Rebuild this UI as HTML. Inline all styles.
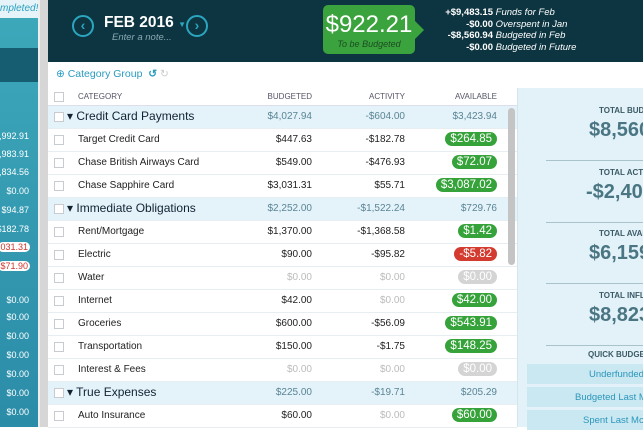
<!DOCTYPE html>
<html><head><style>
*{margin:0;padding:0;box-sizing:border-box}
body{width:643px;height:427px;overflow:hidden;font-family:"Liberation Sans",sans-serif;background:#fff;position:relative}
.side{position:absolute;left:0;top:0;width:38px;height:427px;background:linear-gradient(#3ea9bb,#2b8ca8)}
.side .top{position:absolute;top:0;left:0;width:38px;height:18px;background:#e6f3f8;color:#2aa0c0;font-size:10px;font-style:italic;text-align:right;padding-top:3px;white-space:nowrap;overflow:hidden}
.side .dk{position:absolute;top:48px;height:34px;width:38px;background:#165d72}
.side .n{position:absolute;right:9px;color:#fff;font-size:9px;white-space:nowrap}
.side .r{background:#fff;color:#d0352c;border-radius:7px;padding:0 2px;right:8px}
.gut{position:absolute;left:38px;top:0;width:10px;height:427px;background:#d6d6d6;border-left:2px solid #eee}
.hdr{position:absolute;left:48px;top:0;width:595px;height:62px;background:#0d3541}
.circ{position:absolute;top:15px;width:22px;height:22px;border:2.5px solid #2aa6bf;border-radius:50%;color:#2aa6bf;font-size:14px;font-weight:bold;text-align:center;line-height:16px}
.tbb{position:absolute;left:323px;top:5px;width:92px;height:49px;background:#3aa33d;border-radius:5px;color:#fff;text-align:center}
.tbb:after{content:"";position:absolute;right:-9px;top:16px;border-left:9px solid #3aa33d;border-top:9px solid transparent;border-bottom:9px solid transparent}
.fund{position:absolute;left:437px;top:7px;color:#fff;font-size:9.5px;line-height:11.5px;white-space:nowrap}
.fund b{display:inline-block;width:56px;text-align:right}
.fund i{font-weight:normal}
.tool{position:absolute;left:56px;top:68px;color:#2a9cc0;font-size:10.5px}
.grid{position:absolute;left:48px;top:88px;width:469px}
.row{height:23px;border-bottom:1px solid #e6eef2;position:relative;font-size:10px;color:#222}
.row.g{background:#e4f2f9;font-size:12px;color:#123}
.row.h{height:18px;font-size:8px;color:#556;border-bottom:1px solid #dde}
.cb{position:absolute;left:6px;top:6px;width:10px;height:10px;border:1px solid #c8ccd0;background:#fff}
.h .cb{top:4px}
.nm{position:absolute;left:30px;top:5px}
.g .nm{left:19px;top:3px}
.c1,.c2,.c3{position:absolute;text-align:right;top:5px}
.c1{right:205px}.c2{right:112px}.c3{right:20px}
.g .c1,.g .c2,.g .c3{font-size:10px;color:#5a8595}
.h .c1,.h .c2,.h .c3{top:4px}
.pill{position:absolute;right:20px;top:3px;background:#36a23a;color:#fff;border-radius:9px;padding:1px 5px;font-size:11.5px}
.red{background:#d43b2f}.gr{background:#d4d4d4}
.mut{color:#bbb}
.sb{position:absolute;left:508px;top:108px;width:7px;height:157px;background:#c4c4c4;border-radius:4px}
.rp{position:absolute;left:517px;top:88px;width:126px;height:339px;background:#e3f2f9;border-left:1px solid #d5e5ec}
.lb{position:absolute;left:81px;font-size:8px;font-weight:bold;color:#3b5a66;white-space:nowrap}
.big{position:absolute;left:71px;font-size:20px;font-weight:bold;color:#4a7582;white-space:nowrap}
.ln{position:absolute;left:28px;width:98px;border-top:1px solid #a9c3cc}
.qb{position:absolute;left:9px;width:117px;height:20px;background:#cae8f1;color:#2a96bb;font-size:9.5px;padding:5px 0 0;white-space:nowrap;overflow:hidden}
</style></head><body>
<div class="side">
<div class="top">mpleted!</div>
<div class="dk"></div>
<div class="n" style="top:131px">,992.91</div>
<div class="n" style="top:149px">,983.91</div>
<div class="n" style="top:167px">,834.56</div>
<div class="n" style="top:186px">$0.00</div>
<div class="n" style="top:205px">$94.87</div>
<div class="n" style="top:224px">$182.78</div>
<div class="n r" style="top:242px">031.31</div>
<div class="n r" style="top:261px">$71.90</div>
<div class="n" style="top:295px">$0.00</div>
<div class="n" style="top:312px">$0.00</div>
<div class="n" style="top:331px">$0.00</div>
<div class="n" style="top:350px">$0.00</div>
<div class="n" style="top:369px">$0.00</div>
<div class="n" style="top:388px">$0.00</div>
<div class="n" style="top:407px">$0.00</div>
</div>
<div class="gut"></div>
<div class="hdr">
<div class="circ" style="left:24px">‹</div>
<div style="position:absolute;left:56px;top:14px;color:#fff;font-size:15.5px;font-weight:bold">FEB 2016 <span style="color:#2aa6bf;font-size:8px">▼</span></div>
<div style="position:absolute;left:64px;top:32px;color:#8aa9b4;font-size:9.5px;font-style:italic">Enter a note...</div>
<div class="circ" style="left:138px">›</div>
</div>
<div class="tbb"><div style="font-size:24px;margin-top:6px;font-weight:300">$922.21</div><div style="font-size:9px;font-style:italic;color:#1b4d22;margin-top:0">To be Budgeted</div></div>
<div class="fund">
<div><b>+$9,483.15</b> <i>Funds for Feb</i></div>
<div><b>-$0.00</b> <i>Overspent in Jan</i></div>
<div><b>-$8,560.94</b> <i>Budgeted in Feb</i></div>
<div><b>-$0.00</b> <i>Budgeted in Future</i></div>
</div>
<div class="tool">⊕ Category Group &nbsp;<b>↺</b> <span style="color:#ccc">↻</span></div>
<div class="grid">
<div class="row h"><div class="cb"></div><div class="nm" style="top:4px">CATEGORY</div><div class="c1">BUDGETED</div><div class="c2">ACTIVITY</div><div class="c3">AVAILABLE</div></div>
<div class="row g"><div class="cb"></div><div class="nm">▾ Credit Card Payments</div><div class="c1">$4,027.94</div><div class="c2">-$604.00</div><div class="c3">$3,423.94</div></div>
<div class="row"><div class="cb"></div><div class="nm">Target Credit Card</div><div class="c1">$447.63</div><div class="c2">-$182.78</div><div class="pill">$264.85</div></div>
<div class="row"><div class="cb"></div><div class="nm">Chase British Airways Card</div><div class="c1">$549.00</div><div class="c2">-$476.93</div><div class="pill">$72.07</div></div>
<div class="row"><div class="cb"></div><div class="nm">Chase Sapphire Card</div><div class="c1">$3,031.31</div><div class="c2">$55.71</div><div class="pill">$3,087.02</div></div>
<div class="row g"><div class="cb"></div><div class="nm">▾ Immediate Obligations</div><div class="c1">$2,252.00</div><div class="c2">-$1,522.24</div><div class="c3">$729.76</div></div>
<div class="row"><div class="cb"></div><div class="nm">Rent/Mortgage</div><div class="c1">$1,370.00</div><div class="c2">-$1,368.58</div><div class="pill">$1.42</div></div>
<div class="row"><div class="cb"></div><div class="nm">Electric</div><div class="c1">$90.00</div><div class="c2">-$95.82</div><div class="pill red">-$5.82</div></div>
<div class="row"><div class="cb"></div><div class="nm">Water</div><div class="c1 mut">$0.00</div><div class="c2 mut">$0.00</div><div class="pill gr">$0.00</div></div>
<div class="row"><div class="cb"></div><div class="nm">Internet</div><div class="c1">$42.00</div><div class="c2 mut">$0.00</div><div class="pill">$42.00</div></div>
<div class="row"><div class="cb"></div><div class="nm">Groceries</div><div class="c1">$600.00</div><div class="c2">-$56.09</div><div class="pill">$543.91</div></div>
<div class="row"><div class="cb"></div><div class="nm">Transportation</div><div class="c1">$150.00</div><div class="c2">-$1.75</div><div class="pill">$148.25</div></div>
<div class="row"><div class="cb"></div><div class="nm">Interest &amp; Fees</div><div class="c1 mut">$0.00</div><div class="c2 mut">$0.00</div><div class="pill gr">$0.00</div></div>
<div class="row g"><div class="cb"></div><div class="nm">▾ True Expenses</div><div class="c1">$225.00</div><div class="c2">-$19.71</div><div class="c3">$205.29</div></div>
<div class="row"><div class="cb"></div><div class="nm">Auto Insurance</div><div class="c1">$60.00</div><div class="c2 mut">$0.00</div><div class="pill">$60.00</div></div>
</div>
<div class="sb"></div>
<div class="rp">
<div class="lb" style="top:18px">TOTAL BUDGETED</div>
<div class="big" style="top:31px">$8,560</div>
<div class="ln" style="top:72px"></div>
<div class="lb" style="top:80px">TOTAL ACTIVITY</div>
<div class="big" style="top:93px;left:68px">-$2,40</div>
<div class="ln" style="top:134px"></div>
<div class="lb" style="top:141px">TOTAL AVAILABLE</div>
<div class="big" style="top:154px">$6,159</div>
<div class="ln" style="top:195px"></div>
<div class="lb" style="top:203px">TOTAL INFLOWS</div>
<div class="big" style="top:216px">$8,823</div>
<div class="ln" style="top:257px"></div>
<div class="lb" style="top:262px;left:70px">QUICK BUDGET</div>
<div class="qb" style="top:276px"><span style="position:absolute;left:62px">Underfunded</span></div>
<div class="qb" style="top:299px"><span style="position:absolute;left:48px">Budgeted Last Month</span></div>
<div class="qb" style="top:322px"><span style="position:absolute;left:56px">Spent Last Month</span></div>
</div>
</body></html>
